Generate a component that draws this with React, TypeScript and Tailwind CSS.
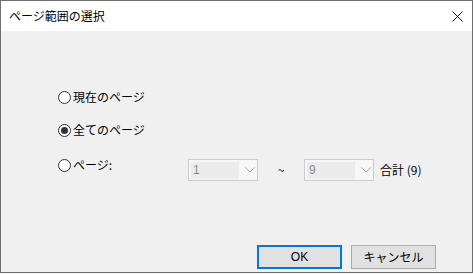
const font = { fontFamily: '"Noto Sans CJK JP", "Noto Sans", sans-serif' };

function Radio({ checked, label }: { checked?: boolean; label: string }) {
  return (
    <div className="flex items-center h-[20px]">
      <span className="w-[13px] h-[13px] rounded-full border border-[#333333] bg-white flex items-center justify-center">
        {checked && <span className="w-[7px] h-[7px] rounded-full bg-[#333333]" />}
      </span>
      <span className="ml-[2px] text-[12px] leading-none text-black">{label}</span>
    </div>
  );
}

function Combo({ value }: { value: string }) {
  return (
    <div className="w-[70px] h-[22px] border border-[#cccccc] bg-[#f7f7f7] flex items-center p-[2px]">
      <div className="w-[48px] h-[17px] bg-[#ececec] flex items-center pl-[2px] text-[12px] text-[#8a8a8a]" style={{ fontFamily: '"Liberation Sans", sans-serif' }}>
        {value}
      </div>
      <svg className="ml-[6px]" width="10" height="6" viewBox="0 0 10 6">
        <path d="M0.5 0.5 L5 5 L9.5 0.5" fill="none" stroke="#a6a6a6" strokeWidth="1" />
      </svg>
    </div>
  );
}

export default function App() {
  return (
    <div className="w-[473px] h-[274px] bg-[#f0f0f0] overflow-hidden" style={font}>
      <div className="w-[473px] h-[273px] border border-[#6e6e6e] flex flex-col">
        {/* title bar */}
        <div className="h-[30px] bg-white flex items-center justify-between pl-[8px] pr-[9px]">
          <span className="text-[12px] text-black">ページ範囲の選択</span>
          <svg width="11" height="11" viewBox="0 0 11 11">
            <path d="M0.5 0.5 L10.5 10.5 M10.5 0.5 L0.5 10.5" stroke="#111111" strokeWidth="1" />
          </svg>
        </div>

        {/* body */}
        <div className="flex-1 flex flex-col pl-[57px] pr-[36px] pb-[3px]">
          <div className="mt-[56px]">
            <Radio label="現在のページ" />
          </div>
          <div className="mt-[13px]">
            <Radio checked label="全てのページ" />
          </div>
          <div className="mt-[15px] flex items-start">
            <div className="w-[130px]">
              <Radio label="ページ:" />
            </div>
            <div className="mt-[4px] flex items-center">
              <Combo value="1" />
              <span className="w-[46px] text-center text-[12px] text-black">~</span>
              <Combo value="9" />
              <span className="ml-[6px] text-[12px] text-black">合計 (9)</span>
            </div>
          </div>
          <div className="mt-auto flex justify-end gap-[9px]">
            <button className="w-[85px] h-[24px] border-2 border-[#0078d7] bg-[#e1e1e1] text-[12px] text-black" style={{ fontFamily: '"Liberation Sans", sans-serif' }}>
              OK
            </button>
            <button className="w-[85px] h-[24px] border border-[#adadad] bg-[#e1e1e1] text-[12px] text-black">
              キャンセル
            </button>
          </div>
        </div>
      </div>
    </div>
  );
}
